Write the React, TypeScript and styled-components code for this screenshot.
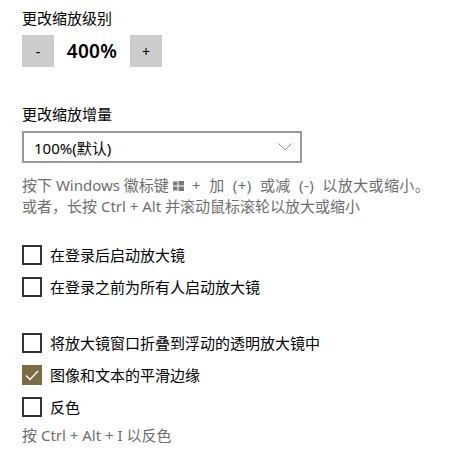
import React from 'react';
import styled, { createGlobalStyle } from 'styled-components';

const GlobalStyle = createGlobalStyle`
  html, body {
    margin: 0;
    padding: 0;
    background: #ffffff;
  }
  body {
    font-family: "Segoe UI", "Noto Sans", "Noto Sans CJK SC", sans-serif;
    color: #000000;
  }
`;

const options = [
  { label: '在登录后启动放大镜', checked: false },
  { label: '在登录之前为所有人启动放大镜', checked: false },
  { label: '将放大镜窗口折叠到浮动的透明放大镜中', checked: false, spaced: true },
  { label: '图像和文本的平滑边缘', checked: true },
  { label: '反色', checked: false },
];

const WinLogo = () => (
  <svg width="11" height="10" viewBox="0 0 11 10" style={{ margin: '0 8px 0 4px', verticalAlign: '0px' }}>
    <rect x="0" y="0.5" width="4.5" height="4" fill="#7a7a7a" />
    <rect x="5.5" y="0" width="5.5" height="4.5" fill="#7a7a7a" />
    <rect x="0" y="5.5" width="4.5" height="4" fill="#7a7a7a" />
    <rect x="5.5" y="5.5" width="5.5" height="4.5" fill="#7a7a7a" />
  </svg>
);

const Chevron = () => (
  <svg width="14" height="8" viewBox="0 0 14 8">
    <path d="M0.5 0.5 L7 7 L13.5 0.5" fill="none" stroke="#8a8a8a" strokeWidth="1" />
  </svg>
);

const Check = () => (
  <svg width="14" height="11" viewBox="0 0 14 11">
    <path d="M1 5.5 L5 9.5 L13 1" fill="none" stroke="#ffffff" strokeWidth="1.3" />
  </svg>
);

export default function App() {
  return (
    <Page>
      <GlobalStyle />
      <Title>更改缩放级别</Title>
      <ZoomRow>
        <StepButton>-</StepButton>
        <ZoomValue>400%</ZoomValue>
        <StepButton>+</StepButton>
      </ZoomRow>

      <Title $top={37}>更改缩放增量</Title>
      <Select>
        <span>100%(默认)</span>
        <Chevron />
      </Select>

      <Help $top={12}>
        按下 Windows 徽标键
        <WinLogo />
        <Wide>+ 加 (+) 或减 (-) 以放大或缩小。</Wide>
        <br />
        或者，长按 Ctrl + Alt 并滚动鼠标滚轮以放大或缩小
      </Help>

      <Options>
        {options.map(o => (
          <OptionRow key={o.label} $spaced={o.spaced}>
            <Box $checked={o.checked}>{o.checked && <Check />}</Box>
            <Label>{o.label}</Label>
          </OptionRow>
        ))}
      </Options>

      <Help $top={8}>按 Ctrl + Alt + I 以反色</Help>
    </Page>
  );
}

const Page = styled.div`
  padding: 8px 0 0 22px;
  width: 450px;
`;

const Title = styled.div<{ $top?: number }>`
  font-size: 15px;
  line-height: 20px;
  margin-top: ${p => p.$top ?? 0}px;
  margin-bottom: 7px;
`;

const ZoomRow = styled.div`
  display: flex;
  align-items: center;
  height: 32px;
  margin-top: 1px;
`;

const StepButton = styled.div`
  width: 32px;
  height: 32px;
  background: #cccccc;
  display: flex;
  align-items: center;
  justify-content: center;
  font-size: 14px;
  color: #000;
`;

const ZoomValue = styled.div`
  width: 76px;
  text-align: center;
  font-size: 19px;
  font-weight: 600;
  letter-spacing: 0.3px;
`;

const Select = styled.div`
  box-sizing: border-box;
  width: 280px;
  height: 32px;
  border: 2px solid #999999;
  display: flex;
  align-items: center;
  justify-content: space-between;
  padding: 0 8px 0 10px;
  font-size: 15px;
`;

const Help = styled.div<{ $top: number }>`
  margin-top: ${p => p.$top}px;
  font-size: 15px;
  line-height: 21px;
  color: #6e6e6e;
  white-space: nowrap;
`;

const Wide = styled.span`
  word-spacing: 4px;
  letter-spacing: 0.4px;
`;

const Options = styled.div`
  display: flex;
  flex-direction: column;
  gap: 12px;
  margin-top: 28px;
`;

const OptionRow = styled.div<{ $spaced?: boolean }>`
  display: flex;
  align-items: center;
  gap: 8px;
  height: 20px;
  margin-top: ${p => (p.$spaced ? 24 : 0)}px;
`;

const Box = styled.div<{ $checked: boolean }>`
  box-sizing: border-box;
  width: 20px;
  height: 20px;
  border: 2px solid ${p => (p.$checked ? '#7a6c45' : '#333333')};
  background: ${p => (p.$checked ? '#7a6c45' : '#ffffff')};
  display: flex;
  align-items: center;
  justify-content: center;
`;

const Label = styled.span`
  font-size: 15px;
  line-height: 20px;
`;
